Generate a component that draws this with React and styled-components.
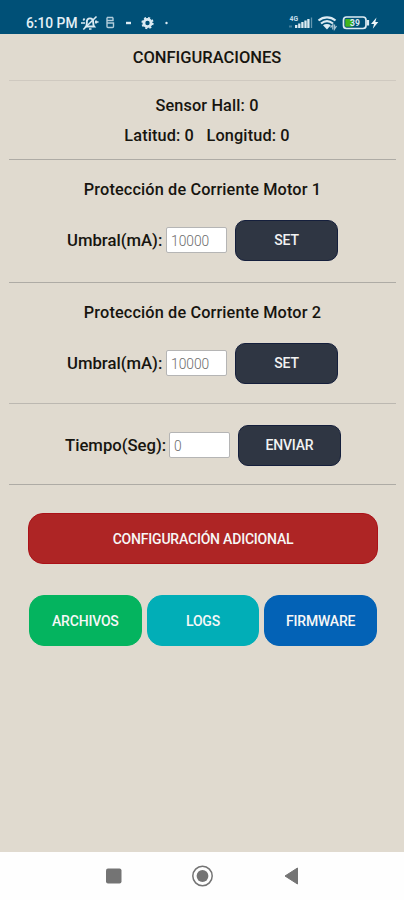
import { useState } from "react";
import styled, { createGlobalStyle } from "styled-components";

const GlobalStyle = createGlobalStyle`
  * {
    box-sizing: border-box;
  }
  body {
    margin: 0;
    background-color: #e0dacf;
    font-family: Roboto, "Liberation Sans", sans-serif;
  }
`;

const Container = styled.div`
  width: 404px;
  height: 900px;
  background-color: #e0dacf;
  color: #17150f;
  display: flex;
  flex-direction: column;
`;

const StatusBar = styled.div`
  height: 34px;
  padding: 12px 25px 0px 26px;
  background-color: #005077;
  color: #e4f0f6;
  display: flex;
  justify-content: space-between;
  align-items: flex-start;
  svg {
    display: block;
  }
`;

const Clock = styled.div`
  width: 54px;
  font-size: 13.8px;
  font-weight: 500;
  line-height: 22px;
  white-space: nowrap;
`;

const StatusGroup = styled.div`
  height: 22px;
  display: flex;
  align-items: center;
`;

const Section = styled.section`
  height: ${(props) => props.$height}px;
  margin: 0px 8px 0px 9px;
  padding-top: ${(props) => props.$top}px;
  border-bottom: 1px solid ${(props) => props.$line || "#aeaba5"};
  display: flex;
  flex-direction: column;
  align-items: center;
`;

const Title = styled.h1`
  margin: 0px;
  padding-left: 9px;
  font-size: 16.5px;
  font-weight: 500;
  line-height: 20px;
`;

const Text = styled.div`
  padding-left: ${(props) => props.$shift || 0}px;
  font-size: 16.3px;
  font-weight: 500;
  line-height: 20px;
  letter-spacing: 0.13px;
  white-space: pre;
`;

const Info = styled.div`
  display: flex;
  flex-direction: column;
  align-items: center;
  gap: 10px;
`;

const Form = styled.div`
  width: 100%;
  height: 42px;
  margin-top: ${(props) => props.$gap}px;
  padding-left: ${(props) => props.$left}px;
  display: flex;
  align-items: center;
  label {
    width: ${(props) => props.$label}px;
    font-size: 16.7px;
    font-weight: 500;
    white-space: nowrap;
  }
`;

const Input = styled.input`
  width: 61px;
  height: 26px;
  margin-right: 8px;
  padding: 1px 4px 0px 4px;
  border: 1px solid #b5b5b5;
  border-radius: 2px;
  background-color: white;
  color: #6c6c6c;
  font-family: Roboto, sans-serif;
  font-size: 13.8px;
  font-weight: 300;
  outline: none;
`;

const DarkButton = styled.button`
  width: 103px;
  height: 41px;
  padding: 0px;
  border: 1px solid #151f3c;
  border-radius: 10px;
  background-color: #2f3643;
  color: #f2f2f2;
  font-family: Roboto, sans-serif;
  font-size: 14px;
  font-weight: 500;
  letter-spacing: -0.2px;
  cursor: pointer;
`;

const Actions = styled.div`
  flex: 1;
  padding: 28px 26px 0px 28px;
  display: flex;
  flex-direction: column;
  gap: 32px;
`;

const ActionRow = styled.div`
  margin-top: -1px;
  padding: 0px 1px 0px 1px;
  display: grid;
  grid-template-columns: 1fr 1fr 1fr;
  gap: 5px;
`;

const ActionButton = styled.button`
  height: 51px;
  padding: 0px;
  border: 1px solid ${(props) => props.$border};
  border-radius: 15px;
  background-color: ${(props) => props.$color};
  color: #f7f7f7;
  font-family: Roboto, sans-serif;
  font-size: 14px;
  font-weight: 500;
  letter-spacing: -0.2px;
  cursor: pointer;
`;

const NavBar = styled.nav`
  height: 48px;
  background-color: #fefefe;
  svg {
    display: block;
  }
`;

function LeftIcons() {
  return (
    <svg width="96" height="22" viewBox="80 12 96 22" fill="none" stroke="#dcebf3">
      <path d="M86 26.500c1-1.200.8-2.600.8-4 0-2.400 1.300-4.100 3.200-4.100s3.200 1.700 3.200 4.100c0 1.400 0 2.800 1 4z" strokeWidth="1.900" />
      <path d="M89 29h2.500M83.300 29.500 96.500 16.500" strokeWidth="1.600" />
      <path d="M84.500 18.500l-1.200 2M81 23h4M96 20.500v3M95 22h3.500" strokeWidth="1.700" />
      <path d="M107 17.500h6M107 17.500v9q0 1 1 1h4.500q1 0 1-1v-3.500h-6.500M113 17.500v3h-6" strokeWidth="1.400" opacity="0.8" />
      <path d="M126 23h5" strokeWidth="2.400" />
      <circle cx="147.500" cy="23" r="3.600" strokeWidth="2.800" />
      <circle cx="147.500" cy="23" r="5.300" strokeWidth="1.700" strokeDasharray="2.080 2.080" />
      <circle cx="166.500" cy="23" r="1.200" fill="#dcebf3" stroke="none" />
    </svg>
  );
}

function RightIcons() {
  return (
    <svg width="94" height="22" viewBox="286 12 94 22" fill="none" stroke="#dcebf3">
      <text x="290.500" y="21" fontSize="6.800" fontWeight="700" fill="#c6dde9" stroke="none">
        4G
      </text>
      <path d="M290 26.500h3" strokeWidth="2" opacity="0.3" />
      <path d="M297.200 28v-3M300.300 28v-4.500M303.400 28v-6M306.500 28v-7.500M309.400 28v-9" strokeWidth="2.300" />
      <path d="M312.500 28V17.500" strokeWidth="1.300" opacity="0.45" />
      <path d="M319.500 20.500c5-4.200 12-4.200 17 0M322 23.500c3.700-3 8.300-3 12 0" strokeWidth="2.200" />
      <path d="M324 25.200c2.200-1.600 5.600-1.600 7.800 0L328 29.500z" fill="#dcebf3" stroke="none" />
      <path d="m331.500 27.500 2.300-2.500v4.500M335.500 24.500v4.500l2-3" strokeWidth="1.300" opacity="0.75" />
      <rect x="344.500" y="17" width="22.500" height="11.500" rx="3" strokeWidth="1.700" />
      <path d="M346.300 19h7.500v7.700h-7.500z" fill="#42b51b" stroke="none" />
      <path d="M369 20v5.500" strokeWidth="2.200" />
      <text x="351" y="26" fontSize="8.500" fontWeight="700" fill="#dcebf3" stroke="none">
        39
      </text>
      <path d="m377.500 17.500-5.500 6.500h3l-1.200 4.800 5.500-6.700h-3z" fill="#eef6fa" stroke="none" />
    </svg>
  );
}

function MotorSection({ name, height, line, gap }) {
  const [value, setValue] = useState("10000");

  return (
    <Section $height={height} $top={20} $line={line}>
      <Text>{name}</Text>
      <Form $gap={gap} $left={58} $label={99}>
        <label>Umbral(mA):</label>
        <Input
          value={value}
          onChange={(e) => {
            setValue(e.target.value);
          }}
        />
        <DarkButton>SET</DarkButton>
      </Form>
    </Section>
  );
}

export default function App() {
  const [seconds, setSeconds] = useState("0");

  return (
    <Container>
      <GlobalStyle />
      <StatusBar>
        <StatusGroup>
          <Clock>6:10 PM</Clock>
          <LeftIcons />
        </StatusGroup>
        <StatusGroup>
          <RightIcons />
        </StatusGroup>
      </StatusBar>
      <Section $height={47} $top={14} $line="#cfc9c0">
        <Title>CONFIGURACIONES</Title>
      </Section>
      <Section $height={79} $top={15}>
        <Info>
          <Text $shift={9}>Sensor Hall: 0</Text>
          <Text $shift={9}>Latitud: 0   Longitud: 0</Text>
        </Info>
      </Section>
      <MotorSection name="Protección de Corriente Motor 1" height={123} gap={19} />
      <MotorSection
        name="Protección de Corriente Motor 2"
        height={121}
        gap={19}
        line="#bcb8b1"
      />
      <Section $height={81} $top={20}>
        <Form $gap={0} $left={56} $label={104}>
          <label>Tiempo(Seg):</label>
          <Input
            value={seconds}
            onChange={(e) => {
              setSeconds(e.target.value);
            }}
          />
          <DarkButton>ENVIAR</DarkButton>
        </Form>
      </Section>
      <Actions>
        <ActionButton $color="#ae2525" $border="#ab1118">
          CONFIGURACIÓN ADICIONAL
        </ActionButton>
        <ActionRow>
          <ActionButton $color="#04b45f" $border="#04b45f">
            ARCHIVOS
          </ActionButton>
          <ActionButton $color="#01aeb7" $border="#01aeb7">
            LOGS
          </ActionButton>
          <ActionButton $color="#0362b6" $border="#0362b6">
            FIRMWARE
          </ActionButton>
        </ActionRow>
      </Actions>
      <NavBar>
        <svg width="404" height="48" viewBox="0 852 404 48">
          <rect x="106" y="868.500" width="15.500" height="15" rx="2" fill="#747474" />
          <circle cx="202.500" cy="876" r="9.700" fill="none" stroke="#747474" strokeWidth="1.500" />
          <circle cx="202.500" cy="876" r="5.900" fill="#747474" />
          <path d="M285 876 297.500 868v16z" fill="#747474" stroke="#747474" strokeLinejoin="round" />
        </svg>
      </NavBar>
    </Container>
  );
}
